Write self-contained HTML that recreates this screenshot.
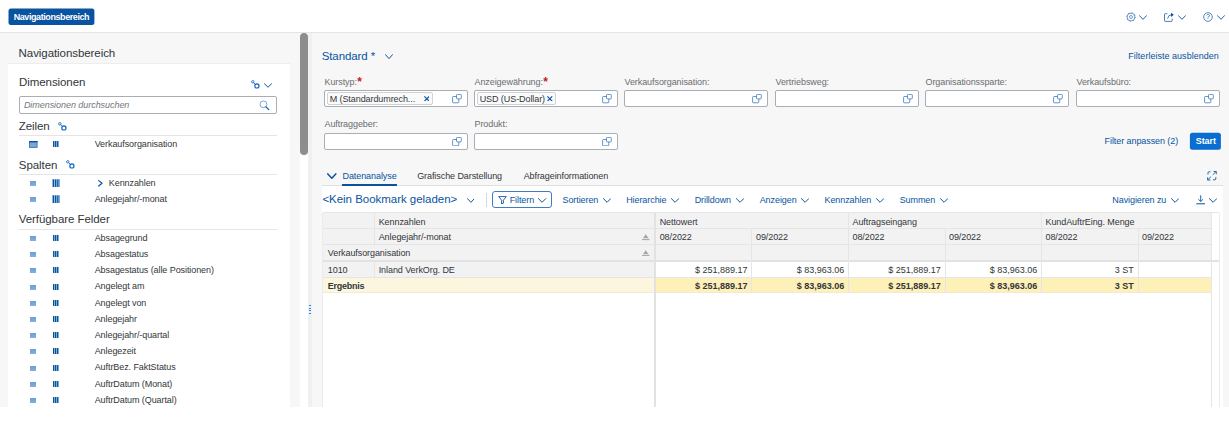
<!DOCTYPE html>
<html lang="de"><head><meta charset="utf-8"><title>Navigationsbereich</title>
<style>
html,body{margin:0;padding:0;background:#fff}
body{width:1229px;height:438px;position:relative;overflow:hidden;font-family:"Liberation Sans",sans-serif;font-size:9px;color:#32363a;letter-spacing:-0.08px}
.a{position:absolute;display:block}
.t{position:absolute;white-space:nowrap;line-height:12px;height:12px}
.h{position:absolute;white-space:nowrap;font-size:11.5px;line-height:16px;height:16px;letter-spacing:-0.07px;color:#32363a}
.b{color:#0854a0}
.l{color:#6a6d70}
.in{position:absolute;box-sizing:border-box;height:17.5px;width:144px;background:#fff;border:1px solid #a7aeb6;border-radius:2px}
.tok{position:absolute;box-sizing:border-box;height:13px;border:1px solid #d0d3d6;border-radius:2px;background:#fafafa}
.hl{position:absolute;height:1px;background:#e5e5e5}
.vl{position:absolute;width:1px;background:#e5e5e5}
.r{text-align:right}
.bd{font-weight:700}
</style></head><body>

<div class="a" style="left:0;top:0;width:1229px;height:32px;background:#fff"></div>
<div class="a" style="left:0;top:32px;width:1229px;height:1px;background:#e4e4e4"></div>
<div class="a" style="left:0;top:33px;width:1229px;height:373.5px;background:#f7f7f7"></div>
<svg class="a" style="left:0;top:0" width="110" height="32" viewBox="0 0 110 32"><rect x="8.5" y="8.5" width="85.9" height="16.6" rx="2.5" fill="#0854a0"/></svg>
<div class="t bd" style="left:13.7px;top:10.8px;color:#fff;font-size:9px;letter-spacing:-0.42px">Navigationsbereich</div>
<svg class="a" style="left:1125.5px;top:12px" width="10" height="10" viewBox="0 0 10 10"><circle cx="5" cy="5" r="3.9" fill="none" stroke="#0854a0" stroke-width="0.6"/><circle cx="5" cy="5" r="4.4" fill="none" stroke="#0854a0" stroke-width="0.5" stroke-dasharray="1.2 2.26"/><circle cx="5" cy="5" r="1.5" fill="none" stroke="#0854a0" stroke-width="0.55"/></svg>
<svg class="a" style="left:1139px;top:15.2px" width="8" height="5.3" viewBox="0 0 8 5.3"><path d="M0.4 0.6 L4.0 4.3 L7.6 0.6" fill="none" stroke="#0854a0" stroke-width="0.9" stroke-linecap="round" stroke-linejoin="round"/></svg>
<svg class="a" style="left:1164px;top:12px" width="10.5" height="10" viewBox="0 0 10.5 10"><path d="M3.4 1.7 H1.3 Q0.5 1.7 0.5 2.5 V8.6 Q0.5 9.4 1.3 9.4 H7.4 Q8.2 9.4 8.2 8.6 V6.6" fill="none" stroke="#0854a0" stroke-width="0.75"/><path d="M3.7 6.6 Q3.9 3.1 7.2 2.8" fill="none" stroke="#0854a0" stroke-width="0.75"/><path d="M7 0.7 L9.9 2.8 L7 4.9 Z" fill="#0854a0"/></svg>
<svg class="a" style="left:1178px;top:15.2px" width="8" height="5.3" viewBox="0 0 8 5.3"><path d="M0.4 0.6 L4.0 4.3 L7.6 0.6" fill="none" stroke="#0854a0" stroke-width="0.9" stroke-linecap="round" stroke-linejoin="round"/></svg>
<svg class="a" style="left:1203px;top:12px" width="10" height="10" viewBox="0 0 10 10"><circle cx="5" cy="5" r="4.3" fill="none" stroke="#0854a0" stroke-width="0.7"/></svg>
<div class="t" style="left:1206px;top:11.4px;font-size:7px;letter-spacing:0;color:#0854a0">?</div>
<svg class="a" style="left:1216.7px;top:15.2px" width="8" height="5.3" viewBox="0 0 8 5.3"><path d="M0.4 0.6 L4.0 4.3 L7.6 0.6" fill="none" stroke="#0854a0" stroke-width="0.9" stroke-linecap="round" stroke-linejoin="round"/></svg>
<div class="h" style="left:18.6px;top:44.5px">Navigationsbereich</div>
<div class="a" style="left:8px;top:63px;width:282px;height:343.5px;background:#fff"></div>
<div class="a" style="left:8px;top:63px;width:282px;height:1px;background:#ededed"></div>
<div class="h" style="left:19px;top:74.2px">Dimensionen</div>
<svg class="a" style="left:250.6px;top:79.8px" width="9" height="9" viewBox="0 0 9 9"><circle cx="1.8" cy="1.8" r="1.2" fill="none" stroke="#0b63bf" stroke-width="0.85"/><path d="M2.7 2.7 L4.3 4.3" stroke="#0b63bf" stroke-width="0.85"/><circle cx="5.9" cy="5.9" r="2.1" fill="none" stroke="#0b63bf" stroke-width="1.15"/></svg>
<svg class="a" style="left:263.6px;top:82.6px" width="8" height="5.3" viewBox="0 0 8 5.3"><path d="M0.4 0.6 L4.0 4.3 L7.6 0.6" fill="none" stroke="#0854a0" stroke-width="1" stroke-linecap="round" stroke-linejoin="round"/></svg>
<div class="in" style="left:18.6px;top:96px;width:258.6px;height:17.6px"></div>
<div class="t" style="left:23.9px;top:99px;font-style:italic;color:#74777a;letter-spacing:-0.05px">Dimensionen durchsuchen</div>
<svg class="a" style="left:259.4px;top:99.5px" width="11" height="11" viewBox="0 0 11 11"><circle cx="4.4" cy="4.3" r="3.4" fill="none" stroke="#3b78bd" stroke-width="0.65"/><path d="M7 6.9 L9.8 9.6" stroke="#0854a0" stroke-width="1.2" stroke-linecap="round"/></svg>
<div class="h" style="left:18.8px;top:117.9px">Zeilen</div>
<svg class="a" style="left:57.5px;top:121.7px" width="9" height="9" viewBox="0 0 9 9"><circle cx="1.8" cy="1.8" r="1.2" fill="none" stroke="#0b63bf" stroke-width="0.85"/><path d="M2.7 2.7 L4.3 4.3" stroke="#0b63bf" stroke-width="0.85"/><circle cx="5.9" cy="5.9" r="2.1" fill="none" stroke="#0b63bf" stroke-width="1.15"/></svg>
<div class="hl" style="left:19px;top:135px;width:258px"></div>
<svg class="a" style="left:28.5px;top:140.7px" width="9" height="7" viewBox="0 0 9 7"><rect x="0.4" y="0.4" width="7.7" height="6" fill="#7aa6d6" stroke="#2f6db5" stroke-width="0.8"/><rect x="0" y="0" width="8.5" height="1.4" fill="#0854a0"/></svg>
<svg class="a" style="left:52.8px;top:141.3px" width="6" height="6" viewBox="0 0 6 6"><path d="M0 0h1.5v6h-1.5zM2 0h1.5v6h-1.5zM4 0h1.5v6h-1.5z" fill="#0854a0"/></svg>
<div class="t" style="left:94.7px;top:138px">Verkaufsorganisation</div>
<div class="h" style="left:18.8px;top:156.9px">Spalten</div>
<svg class="a" style="left:66px;top:160.3px" width="9" height="9" viewBox="0 0 9 9"><circle cx="1.8" cy="1.8" r="1.2" fill="none" stroke="#0b63bf" stroke-width="0.85"/><path d="M2.7 2.7 L4.3 4.3" stroke="#0b63bf" stroke-width="0.85"/><circle cx="5.9" cy="5.9" r="2.1" fill="none" stroke="#0b63bf" stroke-width="1.15"/></svg>
<div class="hl" style="left:19px;top:174px;width:258px"></div>
<div class="a" style="left:29.7px;top:180.5px;width:6.5px;height:5px;background:linear-gradient(#6b9fd3,#86b0dc)"></div>
<svg class="a" style="left:51.7px;top:178.7px" width="8" height="8.5" viewBox="0 0 8 8.5"><rect width="8" height="8.5" fill="#a9c6e6"/><path d="M0.8 0.6h1.3v7.3h-1.3zM3 0.6h1.3v7.3h-1.3zM5.2 0.6h1.3v7.3h-1.3z" fill="#0854a0"/><rect x="6.9" y="0.6" width="0.6" height="7.3" fill="#5d93cc"/></svg>
<svg class="a" style="left:97.5px;top:179.5px" width="5" height="7" viewBox="0 0 5 7"><path d="M0.7 0.6 L4 3.3 L0.7 6" fill="none" stroke="#0854a0" stroke-width="1.2" stroke-linecap="round" stroke-linejoin="round"/></svg>
<div class="t" style="left:108.8px;top:176.6px">Kennzahlen</div>
<div class="a" style="left:29.7px;top:196.7px;width:6.5px;height:5px;background:linear-gradient(#6b9fd3,#86b0dc)"></div>
<svg class="a" style="left:51.7px;top:194.9px" width="8" height="8.5" viewBox="0 0 8 8.5"><rect width="8" height="8.5" fill="#a9c6e6"/><path d="M0.8 0.6h1.3v7.3h-1.3zM3 0.6h1.3v7.3h-1.3zM5.2 0.6h1.3v7.3h-1.3z" fill="#0854a0"/><rect x="6.9" y="0.6" width="0.6" height="7.3" fill="#5d93cc"/></svg>
<div class="t" style="left:94.7px;top:192.8px">Anlegejahr/-monat</div>
<div class="h" style="left:18.8px;top:211.3px">Verfügbare Felder</div>
<div class="hl" style="left:19px;top:229px;width:258px"></div>
<div class="a" style="left:29.7px;top:235.9px;width:6.5px;height:5px;background:linear-gradient(#6b9fd3,#86b0dc)"></div>
<svg class="a" style="left:53px;top:235.0px" width="6" height="6" viewBox="0 0 6 6"><path d="M0 0h1.5v6h-1.5zM2 0h1.5v6h-1.5zM4 0h1.5v6h-1.5z" fill="#0854a0"/></svg>
<div class="t" style="left:94.7px;top:231.7px">Absagegrund</div>
<div class="a" style="left:29.7px;top:252.1px;width:6.5px;height:5px;background:linear-gradient(#6b9fd3,#86b0dc)"></div>
<svg class="a" style="left:53px;top:251.2px" width="6" height="6" viewBox="0 0 6 6"><path d="M0 0h1.5v6h-1.5zM2 0h1.5v6h-1.5zM4 0h1.5v6h-1.5z" fill="#0854a0"/></svg>
<div class="t" style="left:94.7px;top:247.9px">Absagestatus</div>
<div class="a" style="left:29.7px;top:268.3px;width:6.5px;height:5px;background:linear-gradient(#6b9fd3,#86b0dc)"></div>
<svg class="a" style="left:53px;top:267.4px" width="6" height="6" viewBox="0 0 6 6"><path d="M0 0h1.5v6h-1.5zM2 0h1.5v6h-1.5zM4 0h1.5v6h-1.5z" fill="#0854a0"/></svg>
<div class="t" style="left:94.7px;top:264.1px">Absagestatus (alle Positionen)</div>
<div class="a" style="left:29.7px;top:284.5px;width:6.5px;height:5px;background:linear-gradient(#6b9fd3,#86b0dc)"></div>
<svg class="a" style="left:53px;top:283.6px" width="6" height="6" viewBox="0 0 6 6"><path d="M0 0h1.5v6h-1.5zM2 0h1.5v6h-1.5zM4 0h1.5v6h-1.5z" fill="#0854a0"/></svg>
<div class="t" style="left:94.7px;top:280.3px">Angelegt am</div>
<div class="a" style="left:29.7px;top:300.7px;width:6.5px;height:5px;background:linear-gradient(#6b9fd3,#86b0dc)"></div>
<svg class="a" style="left:53px;top:299.8px" width="6" height="6" viewBox="0 0 6 6"><path d="M0 0h1.5v6h-1.5zM2 0h1.5v6h-1.5zM4 0h1.5v6h-1.5z" fill="#0854a0"/></svg>
<div class="t" style="left:94.7px;top:296.5px">Angelegt von</div>
<div class="a" style="left:29.7px;top:316.9px;width:6.5px;height:5px;background:linear-gradient(#6b9fd3,#86b0dc)"></div>
<svg class="a" style="left:53px;top:316.0px" width="6" height="6" viewBox="0 0 6 6"><path d="M0 0h1.5v6h-1.5zM2 0h1.5v6h-1.5zM4 0h1.5v6h-1.5z" fill="#0854a0"/></svg>
<div class="t" style="left:94.7px;top:312.7px">Anlegejahr</div>
<div class="a" style="left:29.7px;top:333.1px;width:6.5px;height:5px;background:linear-gradient(#6b9fd3,#86b0dc)"></div>
<svg class="a" style="left:53px;top:332.2px" width="6" height="6" viewBox="0 0 6 6"><path d="M0 0h1.5v6h-1.5zM2 0h1.5v6h-1.5zM4 0h1.5v6h-1.5z" fill="#0854a0"/></svg>
<div class="t" style="left:94.7px;top:328.9px">Anlegejahr/-quartal</div>
<div class="a" style="left:29.7px;top:349.3px;width:6.5px;height:5px;background:linear-gradient(#6b9fd3,#86b0dc)"></div>
<svg class="a" style="left:53px;top:348.4px" width="6" height="6" viewBox="0 0 6 6"><path d="M0 0h1.5v6h-1.5zM2 0h1.5v6h-1.5zM4 0h1.5v6h-1.5z" fill="#0854a0"/></svg>
<div class="t" style="left:94.7px;top:345.1px">Anlegezeit</div>
<div class="a" style="left:29.7px;top:365.5px;width:6.5px;height:5px;background:linear-gradient(#6b9fd3,#86b0dc)"></div>
<svg class="a" style="left:53px;top:364.6px" width="6" height="6" viewBox="0 0 6 6"><path d="M0 0h1.5v6h-1.5zM2 0h1.5v6h-1.5zM4 0h1.5v6h-1.5z" fill="#0854a0"/></svg>
<div class="t" style="left:94.7px;top:361.3px">AuftrBez. FaktStatus</div>
<div class="a" style="left:29.7px;top:381.7px;width:6.5px;height:5px;background:linear-gradient(#6b9fd3,#86b0dc)"></div>
<svg class="a" style="left:53px;top:380.8px" width="6" height="6" viewBox="0 0 6 6"><path d="M0 0h1.5v6h-1.5zM2 0h1.5v6h-1.5zM4 0h1.5v6h-1.5z" fill="#0854a0"/></svg>
<div class="t" style="left:94.7px;top:377.5px">AuftrDatum (Monat)</div>
<div class="a" style="left:29.7px;top:397.9px;width:6.5px;height:5px;background:linear-gradient(#6b9fd3,#86b0dc)"></div>
<svg class="a" style="left:53px;top:397.0px" width="6" height="6" viewBox="0 0 6 6"><path d="M0 0h1.5v6h-1.5zM2 0h1.5v6h-1.5zM4 0h1.5v6h-1.5z" fill="#0854a0"/></svg>
<div class="t" style="left:94.7px;top:393.7px">AuftrDatum (Quartal)</div>
<div class="a" style="left:299.6px;top:33px;width:8.7px;height:373.5px;background:#fff"></div>
<div class="a" style="left:308.3px;top:33px;width:3.7px;height:373.5px;background:#eff0f2"></div>
<div class="a" style="left:300.3px;top:33px;width:7.6px;height:121.5px;background:#8d8d8d;border-radius:4px"></div>
<div class="a" style="left:309px;top:305px;width:2.1px;height:9.2px;background:repeating-linear-gradient(#2f7fd0 0 1.1px,transparent 1.1px 2.63px)"></div>
<div class="h b" style="left:321.7px;top:47.5px;letter-spacing:-0.1px">Standard *</div>
<svg class="a" style="left:384.5px;top:54px" width="8" height="5.6" viewBox="0 0 8 5.6"><path d="M0.4 0.6 L4.0 4.6 L7.6 0.6" fill="none" stroke="#0854a0" stroke-width="1" stroke-linecap="round" stroke-linejoin="round"/></svg>
<div class="t b" style="left:1128.3px;top:50px;letter-spacing:0.02px">Filterleiste ausblenden</div>
<div class="t l" style="left:324.5px;top:75.8px">Kurstyp:<span style="color:#cc1919;font-weight:700;font-size:12px;line-height:9px;position:relative;top:1.1px;left:0.3px;letter-spacing:0">*</span></div>
<div class="in" style="left:324.0px;top:89.8px"></div>
<svg class="a" style="left:451.7px;top:94px" width="10" height="9.5" viewBox="0 0 10 9.5"><rect x="0.6" y="2.5" width="6.2" height="6.3" rx="0.8" fill="none" stroke="#2468b4" stroke-width="0.7"/><rect x="4.5" y="0.4" width="4.8" height="4.5" rx="0.8" fill="#fff" stroke="#2468b4" stroke-width="0.7"/></svg>
<div class="t l" style="left:474.5px;top:75.8px">Anzeigewährung:<span style="color:#cc1919;font-weight:700;font-size:12px;line-height:9px;position:relative;top:1.1px;left:0.3px;letter-spacing:0">*</span></div>
<div class="in" style="left:474.0px;top:89.8px"></div>
<svg class="a" style="left:601.7px;top:94px" width="10" height="9.5" viewBox="0 0 10 9.5"><rect x="0.6" y="2.5" width="6.2" height="6.3" rx="0.8" fill="none" stroke="#2468b4" stroke-width="0.7"/><rect x="4.5" y="0.4" width="4.8" height="4.5" rx="0.8" fill="#fff" stroke="#2468b4" stroke-width="0.7"/></svg>
<div class="t l" style="left:624.5px;top:75.8px">Verkaufsorganisation:</div>
<div class="in" style="left:624.0px;top:89.8px"></div>
<svg class="a" style="left:751.7px;top:94px" width="10" height="9.5" viewBox="0 0 10 9.5"><rect x="0.6" y="2.5" width="6.2" height="6.3" rx="0.8" fill="none" stroke="#2468b4" stroke-width="0.7"/><rect x="4.5" y="0.4" width="4.8" height="4.5" rx="0.8" fill="#fff" stroke="#2468b4" stroke-width="0.7"/></svg>
<div class="t l" style="left:775.5px;top:75.8px">Vertriebsweg:</div>
<div class="in" style="left:775.0px;top:89.8px"></div>
<svg class="a" style="left:902.7px;top:94px" width="10" height="9.5" viewBox="0 0 10 9.5"><rect x="0.6" y="2.5" width="6.2" height="6.3" rx="0.8" fill="none" stroke="#2468b4" stroke-width="0.7"/><rect x="4.5" y="0.4" width="4.8" height="4.5" rx="0.8" fill="#fff" stroke="#2468b4" stroke-width="0.7"/></svg>
<div class="t l" style="left:925.5px;top:75.8px">Organisationssparte:</div>
<div class="in" style="left:925.0px;top:89.8px"></div>
<svg class="a" style="left:1052.7px;top:94px" width="10" height="9.5" viewBox="0 0 10 9.5"><rect x="0.6" y="2.5" width="6.2" height="6.3" rx="0.8" fill="none" stroke="#2468b4" stroke-width="0.7"/><rect x="4.5" y="0.4" width="4.8" height="4.5" rx="0.8" fill="#fff" stroke="#2468b4" stroke-width="0.7"/></svg>
<div class="t l" style="left:1076.5px;top:75.8px">Verkaufsbüro:</div>
<div class="in" style="left:1076.0px;top:89.8px"></div>
<svg class="a" style="left:1203.7px;top:94px" width="10" height="9.5" viewBox="0 0 10 9.5"><rect x="0.6" y="2.5" width="6.2" height="6.3" rx="0.8" fill="none" stroke="#2468b4" stroke-width="0.7"/><rect x="4.5" y="0.4" width="4.8" height="4.5" rx="0.8" fill="#fff" stroke="#2468b4" stroke-width="0.7"/></svg>
<div class="t l" style="left:324.5px;top:118.3px">Auftraggeber:</div>
<div class="in" style="left:324.0px;top:132.6px"></div>
<svg class="a" style="left:451.7px;top:136.7px" width="10" height="9.5" viewBox="0 0 10 9.5"><rect x="0.6" y="2.5" width="6.2" height="6.3" rx="0.8" fill="none" stroke="#2468b4" stroke-width="0.7"/><rect x="4.5" y="0.4" width="4.8" height="4.5" rx="0.8" fill="#fff" stroke="#2468b4" stroke-width="0.7"/></svg>
<div class="t l" style="left:474.5px;top:118.3px">Produkt:</div>
<div class="in" style="left:474.0px;top:132.6px"></div>
<svg class="a" style="left:601.7px;top:136.7px" width="10" height="9.5" viewBox="0 0 10 9.5"><rect x="0.6" y="2.5" width="6.2" height="6.3" rx="0.8" fill="none" stroke="#2468b4" stroke-width="0.7"/><rect x="4.5" y="0.4" width="4.8" height="4.5" rx="0.8" fill="#fff" stroke="#2468b4" stroke-width="0.7"/></svg>
<div class="tok" style="left:327.2px;top:92.2px;width:105.5px"></div>
<div class="t" style="left:329.7px;top:92.8px">M (Standardumrech...</div>
<svg class="a" style="left:423.8px;top:95.6px" width="5.6" height="5.6" viewBox="0 0 5.6 5.6"><path d="M0.4 0.4 L5.2 5.2 M5.2 0.4 L0.4 5.2" stroke="#0854a0" stroke-width="1.15"/></svg>
<div class="tok" style="left:477.2px;top:92.2px;width:79px"></div>
<div class="t" style="left:479.7px;top:92.8px">USD (US-Dollar)</div>
<svg class="a" style="left:547px;top:95.6px" width="5.6" height="5.6" viewBox="0 0 5.6 5.6"><path d="M0.4 0.4 L5.2 5.2 M5.2 0.4 L0.4 5.2" stroke="#0854a0" stroke-width="1.15"/></svg>
<div class="t b" style="left:1104.6px;top:135.2px">Filter anpassen (2)</div>
<svg class="a" style="left:1180px;top:125px" width="49" height="32" viewBox="0 0 49 32"><rect x="9.9" y="7.8" width="31" height="16.9" rx="2.5" fill="#0a6ed1"/></svg>
<div class="t bd" style="left:1195.7px;top:135px;color:#fff;letter-spacing:-0.05px">Start</div>
<svg class="a" style="left:327px;top:172.6px" width="9.6" height="6.4" viewBox="0 0 9.6 6.4"><path d="M0.8 0.9 L4.8 5.2 L8.8 0.9" fill="none" stroke="#0854a0" stroke-width="1.5" stroke-linecap="round" stroke-linejoin="round"/></svg>
<div class="t b" style="left:342.5px;top:169.8px">Datenanalyse</div>
<div class="t" style="left:417.2px;top:169.8px">Grafische Darstellung</div>
<div class="t" style="left:523.7px;top:169.8px">Abfrageinformationen</div>
<svg class="a" style="left:1207px;top:171px" width="10" height="9.5" viewBox="0 0 10 9.5"><path d="M1 3.5 V1.6 Q1 0.8 1.8 0.8 H3.5 M6 8.8 H8 Q8.8 8.8 8.8 8 V6 " fill="none" stroke="#0854a0" stroke-width="0.85"/><path d="M5.8 3.8 L9.2 0.5 M6.6 0.5 H9.3 V3.2 M4 5.6 L0.7 8.9 M0.6 6.3 V9 H3.4" fill="none" stroke="#0854a0" stroke-width="0.85"/></svg>
<div class="a" style="left:321.7px;top:185.5px;width:901.5px;height:221px;background:#fff"></div>
<div class="hl" style="left:321.7px;top:185px;width:901.5px;background:#e0e0e0"></div>
<div class="a" style="left:342.2px;top:183.8px;width:54.5px;height:2.1px;background:#0854a0"></div>
<div class="h b" style="left:322.4px;top:191.2px;letter-spacing:-0.03px">&lt;Kein Bookmark geladen&gt;</div>
<svg class="a" style="left:466.6px;top:198px" width="7.8" height="5.3" viewBox="0 0 7.8 5.3"><path d="M0.4 0.6 L3.9 4.3 L7.3999999999999995 0.6" fill="none" stroke="#0854a0" stroke-width="1" stroke-linecap="round" stroke-linejoin="round"/></svg>
<div class="vl" style="left:486.3px;top:192.5px;height:14.2px;background:#d9d9d9"></div>
<div class="a" style="left:492.4px;top:190.8px;width:59.3px;height:17.2px;box-sizing:border-box;border:1px solid #3f7dc2;border-radius:3px;background:#fff"></div>
<svg class="a" style="left:497.8px;top:195.6px" width="9" height="8.6" viewBox="0 0 9 8.6"><path d="M0.7 0.6 H8.3 L5.4 4.2 V7.2 L3.6 8 V4.2 Z" fill="none" stroke="#0854a0" stroke-width="0.9" stroke-linejoin="round"/></svg>
<div class="t b" style="left:509.7px;top:193.7px">Filtern</div>
<svg class="a" style="left:538.4px;top:198px" width="8.2" height="5.3" viewBox="0 0 8.2 5.3"><path d="M0.4 0.6 L4.1 4.3 L7.799999999999999 0.6" fill="none" stroke="#0854a0" stroke-width="1" stroke-linecap="round" stroke-linejoin="round"/></svg>
<div class="t b" style="left:562.5px;top:193.7px">Sortieren</div>
<svg class="a" style="left:602.5px;top:198px" width="8.2" height="5.3" viewBox="0 0 8.2 5.3"><path d="M0.4 0.6 L4.1 4.3 L7.799999999999999 0.6" fill="none" stroke="#0854a0" stroke-width="1" stroke-linecap="round" stroke-linejoin="round"/></svg>
<div class="t b" style="left:626.2px;top:193.7px">Hierarchie</div>
<svg class="a" style="left:670.5px;top:198px" width="8.2" height="5.3" viewBox="0 0 8.2 5.3"><path d="M0.4 0.6 L4.1 4.3 L7.799999999999999 0.6" fill="none" stroke="#0854a0" stroke-width="1" stroke-linecap="round" stroke-linejoin="round"/></svg>
<div class="t b" style="left:694.7px;top:193.7px">Drilldown</div>
<svg class="a" style="left:736.2px;top:198px" width="8.2" height="5.3" viewBox="0 0 8.2 5.3"><path d="M0.4 0.6 L4.1 4.3 L7.799999999999999 0.6" fill="none" stroke="#0854a0" stroke-width="1" stroke-linecap="round" stroke-linejoin="round"/></svg>
<div class="t b" style="left:759.7px;top:193.7px">Anzeigen</div>
<svg class="a" style="left:800.8px;top:198px" width="8.2" height="5.3" viewBox="0 0 8.2 5.3"><path d="M0.4 0.6 L4.1 4.3 L7.799999999999999 0.6" fill="none" stroke="#0854a0" stroke-width="1" stroke-linecap="round" stroke-linejoin="round"/></svg>
<div class="t b" style="left:824.5px;top:193.7px">Kennzahlen</div>
<svg class="a" style="left:875.8px;top:198px" width="8.2" height="5.3" viewBox="0 0 8.2 5.3"><path d="M0.4 0.6 L4.1 4.3 L7.799999999999999 0.6" fill="none" stroke="#0854a0" stroke-width="1" stroke-linecap="round" stroke-linejoin="round"/></svg>
<div class="t b" style="left:899.7px;top:193.7px">Summen</div>
<svg class="a" style="left:939.5px;top:198px" width="8.2" height="5.3" viewBox="0 0 8.2 5.3"><path d="M0.4 0.6 L4.1 4.3 L7.799999999999999 0.6" fill="none" stroke="#0854a0" stroke-width="1" stroke-linecap="round" stroke-linejoin="round"/></svg>
<div class="t b" style="left:1112.3px;top:193.7px">Navigieren zu</div>
<svg class="a" style="left:1170.8px;top:198px" width="8.2" height="5.3" viewBox="0 0 8.2 5.3"><path d="M0.4 0.6 L4.1 4.3 L7.799999999999999 0.6" fill="none" stroke="#0854a0" stroke-width="1" stroke-linecap="round" stroke-linejoin="round"/></svg>
<svg class="a" style="left:1195.5px;top:195px" width="9.4" height="9.6" viewBox="0 0 9.4 9.6"><path d="M4.7 0.3 V6.3 M2.4 4.3 L4.7 6.5 L7 4.3" fill="none" stroke="#0854a0" stroke-width="0.9"/><path d="M0.3 8.8 H9.1" stroke="#0854a0" stroke-width="1"/></svg>
<svg class="a" style="left:1208.7px;top:198px" width="8.2" height="5.3" viewBox="0 0 8.2 5.3"><path d="M0.4 0.6 L4.1 4.3 L7.799999999999999 0.6" fill="none" stroke="#0854a0" stroke-width="1" stroke-linecap="round" stroke-linejoin="round"/></svg>
<div class="a" style="left:322.6px;top:212.5px;width:888.4px;height:47.39999999999998px;background:#f2f2f2"></div>
<div class="a" style="left:322.6px;top:261.9px;width:331.4px;height:15.7px;background:#f2f2f2"></div>
<div class="a" style="left:322.6px;top:277.6px;width:331.4px;height:15.3px;background:#fdf6df"></div>
<div class="a" style="left:656px;top:277.6px;width:555px;height:15.3px;background:#fef0b9"></div>
<div class="vl" style="left:1219.3px;top:212.5px;height:194px;background:#ebebeb"></div>
<div class="hl" style="left:322.6px;top:212px;width:896.6999999999999px;background:#e5e5e5"></div>
<div class="hl" style="left:322.6px;top:228.2px;width:888.4px;background:#e5e5e5"></div>
<div class="hl" style="left:322.6px;top:244px;width:888.4px;background:#e5e5e5"></div>
<div class="a" style="left:322.6px;top:259.9px;width:896.6999999999999px;height:2px;background:#e2e2e2"></div>
<div class="hl" style="left:322.6px;top:277.3px;width:888.4px;background:#e5e5e5"></div>
<div class="hl" style="left:322.6px;top:292.4px;width:888.4px;background:#f3ead0"></div>
<div class="vl" style="left:322.1px;top:212.5px;height:194px;background:#ececec"></div>
<div class="vl" style="left:374.2px;top:212.5px;height:31.5px"></div>
<div class="vl" style="left:374.2px;top:262px;height:15.5px"></div>
<div class="a" style="left:654px;top:212.5px;width:2px;height:194px;background:#e2e2e2"></div>
<div class="vl" style="left:751px;top:228.5px;height:64.39999999999998px"></div>
<div class="vl" style="left:848.3px;top:212.5px;height:80.39999999999998px"></div>
<div class="vl" style="left:944.6px;top:228.5px;height:64.39999999999998px"></div>
<div class="vl" style="left:1041.2px;top:212.5px;height:80.39999999999998px"></div>
<div class="vl" style="left:1137.8px;top:228.5px;height:64.39999999999998px"></div>
<div class="vl" style="left:1210.5px;top:212.5px;height:194px"></div>
<div class="t " style="left:378.7px;top:215.6px">Kennzahlen</div>
<div class="t " style="left:378.7px;top:231.4px">Anlegejahr/-monat</div>
<div class="t " style="left:327.8px;top:247px">Verkaufsorganisation</div>
<div class="t " style="left:327.8px;top:264.4px">1010</div>
<div class="t " style="left:378.7px;top:264.4px">Inland VerkOrg. DE</div>
<div class="t bd" style="left:327.8px;top:279.9px;letter-spacing:-0.25px">Ergebnis</div>
<svg class="a" style="left:642px;top:234.3px" width="7.5" height="6.5" viewBox="0 0 7.5 6.5"><path d="M3.75 0.3 L6.6 4.2 H0.9 Z" fill="#a6a6a6"/><rect x="0" y="5.2" width="7.5" height="0.9" fill="#9a9a9a"/></svg>
<svg class="a" style="left:642px;top:249.8px" width="7.5" height="6.5" viewBox="0 0 7.5 6.5"><path d="M3.75 0.3 L6.6 4.2 H0.9 Z" fill="#a6a6a6"/><rect x="0" y="5.2" width="7.5" height="0.9" fill="#9a9a9a"/></svg>
<div class="t " style="left:659.7px;top:215.6px">Nettowert</div>
<div class="t " style="left:852.5px;top:215.6px">Auftragseingang</div>
<div class="t " style="left:1045.5px;top:215.6px">KundAuftrEing. Menge</div>
<div class="t " style="left:659.7px;top:231.4px">08/2022</div>
<div class="t " style="left:756px;top:231.4px">09/2022</div>
<div class="t " style="left:852.5px;top:231.4px">08/2022</div>
<div class="t " style="left:949px;top:231.4px">09/2022</div>
<div class="t " style="left:1045.5px;top:231.4px">08/2022</div>
<div class="t " style="left:1142px;top:231.4px">09/2022</div>
<div class="t r" style="left:657.5px;width:90px;top:264.4px;letter-spacing:0">$ 251,889.17</div>
<div class="t r bd" style="left:657.5px;width:90px;top:279.9px;letter-spacing:0">$ 251,889.17</div>
<div class="t r" style="left:754.3px;width:90px;top:264.4px;letter-spacing:0">$ 83,963.06</div>
<div class="t r bd" style="left:754.3px;width:90px;top:279.9px;letter-spacing:0">$ 83,963.06</div>
<div class="t r" style="left:850.8px;width:90px;top:264.4px;letter-spacing:0">$ 251,889.17</div>
<div class="t r bd" style="left:850.8px;width:90px;top:279.9px;letter-spacing:0">$ 251,889.17</div>
<div class="t r" style="left:947.2px;width:90px;top:264.4px;letter-spacing:0">$ 83,963.06</div>
<div class="t r bd" style="left:947.2px;width:90px;top:279.9px;letter-spacing:0">$ 83,963.06</div>
<div class="t r" style="left:1043.7px;width:90px;top:264.4px;letter-spacing:0">3 ST</div>
<div class="t r bd" style="left:1043.7px;width:90px;top:279.9px;letter-spacing:0">3 ST</div>
</body></html>
